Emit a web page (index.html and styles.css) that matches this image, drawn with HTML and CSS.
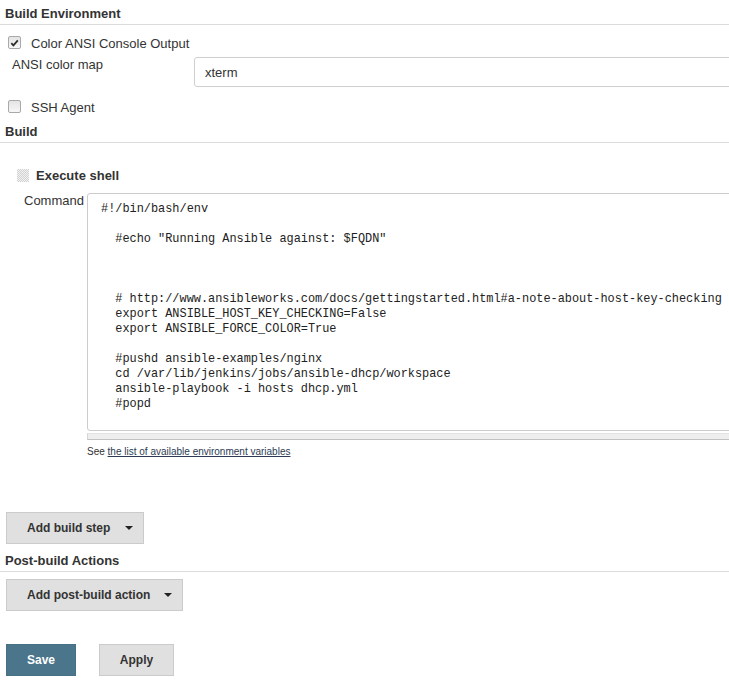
FILE: index.html
```html
<!DOCTYPE html>
<html>
<head>
<meta charset="utf-8">
<link rel="stylesheet" href="styles.css">
</head>
<body>
<div class="page">
  <div class="section-header">Build Environment</div>

  <div class="check-row first">
    <span class="cbox checked"><svg viewBox="0 0 12 12" width="12" height="12"><path d="M2.5 6.2 L4.8 8.6 L9.6 3.2" fill="none" stroke="#2b2b2b" stroke-width="1.9"/></svg></span>
    <span class="check-label">Color ANSI Console Output</span>
  </div>

  <div class="field-row">
    <div class="field-label">ANSI color map</div>
    <div class="select-box">xterm</div>
  </div>

  <div class="check-row ssh">
    <span class="cbox"></span>
    <span class="check-label">SSH Agent</span>
  </div>

  <div class="section-header build">Build</div>

  <div class="step-title">
    <span class="handle"></span>
    <span class="step-name">Execute shell</span>
  </div>

  <div class="command-row">
    <div class="command-label">Command</div>
    <div class="command-body">
      <pre class="code">#!/bin/bash/env

  #echo "Running Ansible against: $FQDN"



  # http://www.ansibleworks.com/docs/gettingstarted.html#a-note-about-host-key-checking
  export ANSIBLE_HOST_KEY_CHECKING=False
  export ANSIBLE_FORCE_COLOR=True

  #pushd ansible-examples/nginx
  cd /var/lib/jenkins/jobs/ansible-dhcp/workspace
  ansible-playbook -i hosts dhcp.yml
  #popd</pre>
      <div class="resize-bar"></div>
      <div class="hint">See <a href="#">the list of available environment variables</a></div>
    </div>
  </div>

  <div class="btn-row add-step">
    <button class="btn menu">Add build step<span class="caret"></span></button>
  </div>

  <div class="section-header post">Post-build Actions</div>

  <div class="btn-row add-post">
    <button class="btn menu wide">Add post-build action<span class="caret"></span></button>
  </div>

  <div class="btn-row actions">
    <button class="btn primary">Save</button>
    <button class="btn apply">Apply</button>
  </div>
</div>
</body>
</html>
```
FILE: styles.css
```css
html, body {
  margin: 0;
  padding: 0;
  overflow: hidden;
  background: #fff;
}

body {
  font-family: "Liberation Sans", Arial, sans-serif;
  font-size: 13px;
  color: #333;
}

.page {
  width: 760px;
}

.section-header {
  height: 25px;
  line-height: 23px;
  padding-left: 5px;
  font-weight: bold;
  font-size: 13px;
  color: #333;
  border-bottom: 1px solid #dcdcdc;
  box-sizing: border-box;
  padding-top: 2px;
}

.check-row {
  display: flex;
  align-items: center;
  height: 20px;
  padding-left: 8px;
}

.check-row.first {
  margin-top: 8px;
}

.check-row.ssh {
  margin-top: 10px;
}

.cbox {
  width: 11px;
  height: 11px;
  border: 1px solid #a9a9a9;
  border-radius: 2px;
  background: linear-gradient(#e4e4e4, #f7f7f7);
  display: inline-flex;
  align-items: center;
  justify-content: center;
  margin-right: 10px;
  margin-top: -1px;
}

.cbox svg {
  display: block;
}

.check-label {
  line-height: 20px;
  padding-top: 2px;
}

.field-row {
  display: flex;
  margin-top: 4px;
}

.field-label {
  width: 182px;
  padding-left: 12px;
  line-height: 16px;
}

.select-box {
  flex: 1;
  height: 30px;
  box-sizing: border-box;
  border: 1px solid #cfcfcf;
  border-radius: 3px;
  padding-left: 10px;
  line-height: 29px;
  font-size: 13px;
}

.section-header.build {
  margin-top: 1px;
}

.step-title {
  display: flex;
  align-items: center;
  height: 20px;
  margin-top: 22px;
  padding-left: 17px;
}

.handle {
  width: 12px;
  height: 13px;
  background-image:
    linear-gradient(45deg, #d2d2d2 25%, transparent 25%, transparent 75%, #d2d2d2 75%),
    linear-gradient(45deg, #d2d2d2 25%, transparent 25%, transparent 75%, #d2d2d2 75%);
  background-size: 2px 2px;
  background-position: 0 0, 1px 1px;
  background-color: #f2f2f2;
  margin-right: 7px;
}

.step-name {
  font-weight: bold;
  font-size: 13px;
}

.command-row {
  display: flex;
  margin-top: 8px;
}

.command-label {
  width: 63px;
  padding-left: 24px;
  line-height: 16px;
}

.command-body {
  flex: 1;
}

.code {
  margin: 0;
  height: 238px;
  box-sizing: border-box;
  border: 1px solid #cccccc;
  border-radius: 3px 0 0 3px;
  padding: 8px 0 0 13px;
  font-family: "Liberation Mono", "DejaVu Sans Mono", monospace;
  font-size: 11.9px;
  line-height: 15px;
  color: #222;
  white-space: pre;
  overflow: hidden;
}

.resize-bar {
  margin-top: 2px;
  height: 7px;
  box-sizing: border-box;
  background: #eeeeee;
  border-top: 1px solid #e2e2e2;
  border-left: 1px solid #d6d6d6;
  border-bottom: 1px solid #c2c2c2;
}

.hint {
  margin-top: 5px;
  font-size: 10px;
  line-height: 14px;
  color: #333;
}

.hint a {
  color: #2c3a52;
  text-decoration: underline;
}

.btn-row {
  display: flex;
  padding-left: 6px;
}

.btn-row.add-step {
  margin-top: 53px;
}

.section-header.post {
  margin-top: 3px;
}

.btn-row.add-post {
  margin-top: 7px;
}

.btn-row.actions {
  margin-top: 33px;
  gap: 23px;
}

.btn {
  font-family: "Liberation Sans", Arial, sans-serif;
  font-weight: bold;
  font-size: 12px;
  color: #333;
  height: 32px;
  box-sizing: border-box;
  background: #e0e0e0;
  border: 1px solid #cbcbcb;
  border-radius: 0;
  padding: 0;
  margin: 0;
  display: inline-flex;
  align-items: center;
  cursor: pointer;
}

.btn.menu {
  width: 138px;
  padding-left: 20px;
}

.btn.menu.wide {
  width: 177px;
}

.caret {
  width: 0;
  height: 0;
  border-left: 4px solid transparent;
  border-right: 4px solid transparent;
  border-top: 4px solid #222;
  margin-left: auto;
  margin-right: 10px;
}

.btn.primary {
  width: 70px;
  justify-content: center;
  background: #4b758b;
  border-color: #467086;
  color: #fff;
}

.btn.apply {
  width: 75px;
  justify-content: center;
}
```
